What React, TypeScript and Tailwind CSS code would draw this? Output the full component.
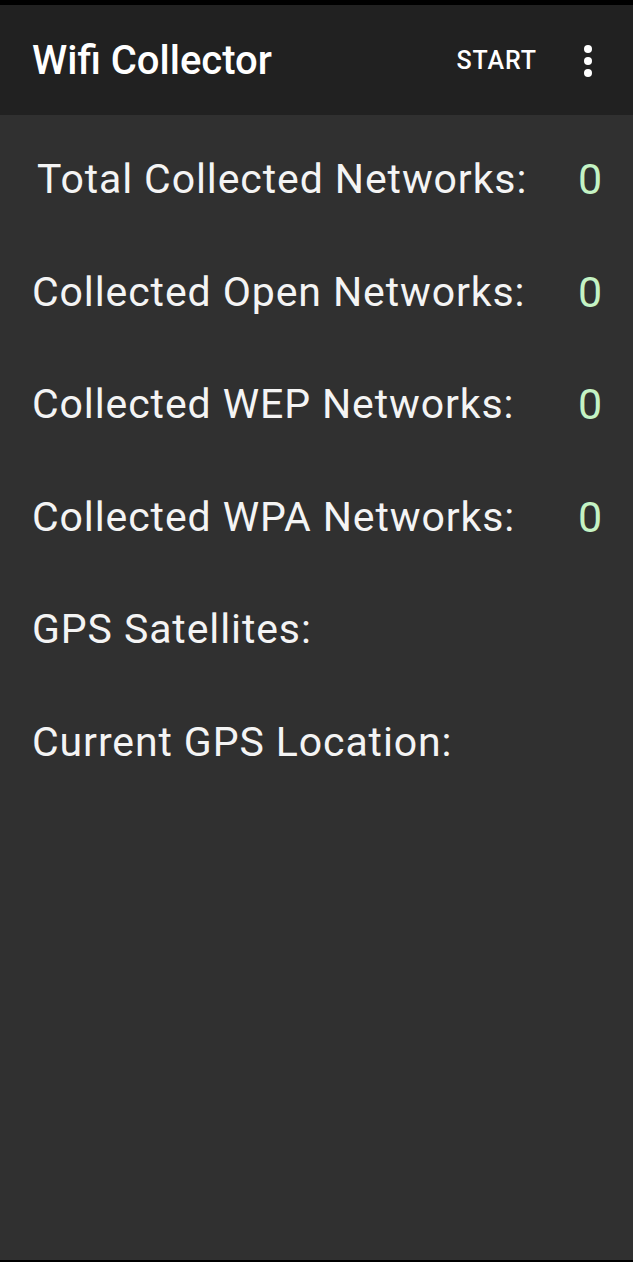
import React from "react";

const rows: { label: string; value?: string; indent?: boolean }[] = [
  { label: "Total Collected Networks:", value: "0", indent: true },
  { label: "Collected Open Networks:", value: "0" },
  { label: "Collected WEP Networks:", value: "0" },
  { label: "Collected WPA Networks:", value: "0" },
  { label: "GPS Satellites:" },
  { label: "Current GPS Location:" },
];

export default function App() {
  return (
    <div
      className="flex flex-col h-[1262px] w-[633px] bg-black text-white overflow-hidden"
      style={{ fontFamily: "Roboto, 'Noto Sans', sans-serif" }}
    >
      <div className="h-[5px] bg-black" />
      <header className="h-[110px] bg-[#212121] flex items-center pl-[32px] pr-[41px]">
        <h1 className="text-[40px] font-medium leading-[110px] pt-[2px] flex-1 text-white">
          Wifi Collector
        </h1>
        <span className="text-[25px] font-medium leading-none tracking-[0.9px] text-white mr-[47px] mt-[1px]">
          START
        </span>
        <div className="flex flex-col items-center gap-[4px] mt-[1px]">
          <span className="w-[8px] h-[8px] rounded-full bg-white" />
          <span className="w-[8px] h-[8px] rounded-full bg-white" />
          <span className="w-[8px] h-[8px] rounded-full bg-white" />
        </div>
      </header>
      <main className="flex-1 bg-[#303030] pt-[8px] pl-[32px]">
        {rows.map((r) => (
          <div key={r.label} className="flex text-[41px] tracking-[0.9px] leading-[112.6px] text-[#f4f4f4]">
            <span className={`w-[546px] ${r.indent ? "pl-[5px]" : ""}`}>{r.label}</span>
            {r.value && <span className="text-[#c4f3c4] text-[43px]">{r.value}</span>}
          </div>
        ))}
      </main>
      <div className="h-[2px] bg-black" />
    </div>
  );
}
